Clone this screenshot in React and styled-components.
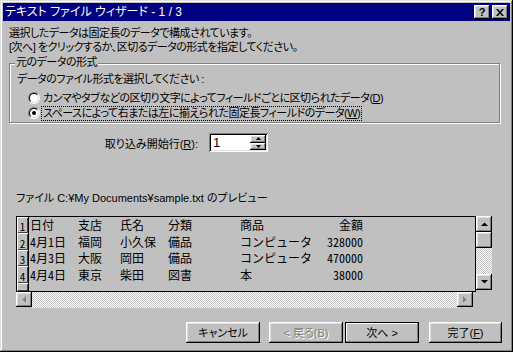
import React from 'react';
import styled, { createGlobalStyle, css } from 'styled-components';

const GlobalStyle = createGlobalStyle`
  html, body {
    margin: 0;
    padding: 0;
    background: #c0c0c0;
  }
  body {
    font-family: "Liberation Sans", "Noto Sans CJK JP", sans-serif;
    font-size: 12px;
    color: #000;
  }
`;

// dialog text is narrower than Noto's full-width glyphs, so tighten it
const dialogText = css`
  font-size: 11px;
  letter-spacing: -0.5px;
  font-feature-settings: "palt";
`;

const raised = css`
  background: #c0c0c0;
  box-shadow: inset -1px -1px 0 #000, inset 1px 1px 0 #fff,
    inset -2px -2px 0 #808080, inset 2px 2px 0 #dfdfdf;
`;

const checker = css`
  background: repeating-conic-gradient(#fff 0 25%, #c0c0c0 0 50%) 0 0 / 2px 2px;
`;

const rows = [
  { n: '1', h: 16, cells: ['日付', '支店', '氏名', '分類', '商品', '金額'] },
  { n: '2', h: 17, cells: ['4月1日', '福岡', '小久保', '備品', 'コンピュータ', '328000'] },
  { n: '3', h: 16, cells: ['4月3日', '大阪', '岡田', '備品', 'コンピュータ', '470000'] },
  { n: '4', h: 17, cells: ['4月4日', '東京', '柴田', '図書', '本', '38000'] },
];

const Arrow = ({ dir, disabled }) => {
  const pts = {
    up: '0,4 7,4 3.5,0.5',
    down: '0,0 7,0 3.5,3.5',
    left: '4,0 4,7 0.5,3.5',
    right: '0,0 0,7 3.5,3.5',
  }[dir];
  const vertical = dir === 'up' || dir === 'down';
  return (
    <svg width={vertical ? 7 : 4} height={vertical ? 4 : 7} viewBox={vertical ? '0 0 7 4' : '0 0 4 7'}>
      <polygon points={pts} fill={disabled ? '#808080' : '#000'} />
    </svg>
  );
};

const App = () => {
  return (
    <>
      <GlobalStyle />
      <Window>
        <TitleBar>
          <TitleText>テキスト ファイル ウィザード - 1 / 3</TitleText>
          <CaptionButton>?</CaptionButton>
          <CaptionButton $ml={2}>
            <svg width="8" height="7" viewBox="0 0 8 7">
              <path d="M0 0h2l2 2.5L6 0h2L5 3.5 8 7H6L4 4.5 2 7H0l3-3.5z" fill="#000" />
            </svg>
          </CaptionButton>
        </TitleBar>

        <Body>
          <Intro>
            選択したデータは固定長のデータで構成されています。
            <br />
            [次へ] をクリックするか、区切るデータの形式を指定してください。
          </Intro>

          <GroupBox>
            <Legend>元のデータの形式</Legend>
            <Prompt>データのファイル形式を選択してください :</Prompt>
            <RadioRow $mt={5}>
              <RadioOuter>
                <RadioInner />
              </RadioOuter>
              <RadioLabel>
                カンマやタブなどの区切り文字によってフィールドごとに区切られたデータ(<u>D</u>)
              </RadioLabel>
            </RadioRow>
            <RadioRow $mt={1}>
              <RadioOuter>
                <RadioInner>
                  <RadioDot />
                </RadioInner>
              </RadioOuter>
              <RadioLabel $focused>
                スペースによって右または左に揃えられた固定長フィールドのデータ(<u>W</u>)
              </RadioLabel>
            </RadioRow>
          </GroupBox>

          <StartRow>
            <StartLabel>
              取り込み開始行(<u>R</u>):
            </StartLabel>
            <SpinBox>
              <SpinValue>1</SpinValue>
              <SpinButtons>
                <SpinButton>
                  <svg width="5" height="3" viewBox="0 0 5 3">
                    <polygon points="0,3 5,3 2.5,0" fill="#000" />
                  </svg>
                </SpinButton>
                <SpinButton>
                  <svg width="5" height="3" viewBox="0 0 5 3">
                    <polygon points="0,0 5,0 2.5,3" fill="#000" />
                  </svg>
                </SpinButton>
              </SpinButtons>
            </SpinBox>
          </StartRow>

          <PreviewCaption>ファイル C:¥My Documents¥sample.txt のプレビュー</PreviewCaption>

          <PreviewFrame>
            <DataArea>
              {rows.map((r) => (
                <DataRow key={r.n} $h={r.h}>
                  <RowNum>{r.n}</RowNum>
                  <Cells>
                    {r.cells.map((c, i) => (
                      <Cell key={i} $right={i === 5}>
                        {c}
                      </Cell>
                    ))}
                  </Cells>
                </DataRow>
              ))}
              <DataRow $grow>
                <RowNum />
              </DataRow>
            </DataArea>

            <VScroll>
              <ScrollButton>
                <Arrow dir="up" />
              </ScrollButton>
              <ScrollButton />
              <Track />
              <ScrollButton>
                <Arrow dir="down" />
              </ScrollButton>
            </VScroll>

            <HScroll>
              <ScrollButton $small>
                <Arrow dir="left" disabled />
              </ScrollButton>
              <Track />
              <ScrollButton $small>
                <Arrow dir="right" disabled />
              </ScrollButton>
            </HScroll>
          </PreviewFrame>

          <ButtonRow>
            <PushButton $w={74}>キャンセル</PushButton>
            <PushButton $w={74} $ml={9} $disabled>
              &lt; 戻る(B)
            </PushButton>
            <PushButton $w={74} $ml={2} $default>
              次へ &gt;
            </PushButton>
            <PushButton $w={73} $ml={10}>
              完了(<u>F</u>)
            </PushButton>
          </ButtonRow>
        </Body>
      </Window>
    </>
  );
};

const Window = styled.div`
  width: 513px;
  height: 352px;
  box-sizing: border-box;
  padding: 3px;
  background: #c0c0c0;
  box-shadow: inset -1px -1px 0 #000, inset 1px 1px 0 #dfdfdf,
    inset -2px -2px 0 #808080, inset 2px 2px 0 #fff;
  overflow: hidden;
`;

const TitleBar = styled.div`
  height: 18px;
  display: flex;
  align-items: center;
  padding: 0 2px;
  background: #000080;
  color: #fff;
`;

const TitleText = styled.div`
  flex: 1;
  line-height: 18px;
  white-space: nowrap;
  font-feature-settings: "palt";
`;

const CaptionButton = styled.div`
  ${raised};
  width: 16px;
  height: 14px;
  margin-left: ${(p) => p.$ml || 0}px;
  display: flex;
  align-items: center;
  justify-content: center;
  color: #000;
  font-family: "Liberation Sans", sans-serif;
  font-weight: 700;
  font-size: 11px;
  line-height: 14px;
`;

const Body = styled.div`
  padding: 5px 0 0 6px;
`;

const Intro = styled.div`
  ${dialogText};
  line-height: 14px;
  white-space: nowrap;
`;

const GroupBox = styled.div`
  ${dialogText};
  position: relative;
  width: 491px;
  box-sizing: border-box;
  margin-top: 9px;
  padding: 8px 0 2px 7px;
  border: 1px solid #808080;
  box-shadow: inset 1px 1px 0 #fff, 1px 1px 0 #fff;
`;

const Legend = styled.span`
  position: absolute;
  top: -9px;
  left: 5px;
  padding: 0 1px;
  line-height: 14px;
  background: #c0c0c0;
`;

const Prompt = styled.div`
  line-height: 14px;
`;

const RadioRow = styled.div`
  display: flex;
  align-items: center;
  height: 14px;
  margin-top: ${(p) => p.$mt}px;
  padding-left: 11px;
`;

const RadioOuter = styled.span`
  box-sizing: border-box;
  width: 12px;
  height: 12px;
  border-radius: 50%;
  border: 1px solid;
  border-color: #808080 #fff #fff #808080;
  display: flex;
`;

const RadioInner = styled.span`
  box-sizing: border-box;
  width: 10px;
  height: 10px;
  border-radius: 50%;
  border: 1px solid;
  border-color: #000 #dfdfdf #dfdfdf #000;
  background: #fff;
  display: flex;
  align-items: center;
  justify-content: center;
`;

const RadioDot = styled.span`
  width: 4px;
  height: 4px;
  border-radius: 50%;
  background: #000;
`;

const RadioLabel = styled.span`
  margin-left: 2px;
  padding: 0 1px;
  line-height: 13px;
  white-space: nowrap;
  outline: ${(p) => (p.$focused ? '1px dotted #000' : 'none')};
`;

const StartRow = styled.div`
  ${dialogText};
  letter-spacing: 0;
  display: flex;
  align-items: center;
  gap: 11px;
  margin-top: 10px;
  padding-left: 92px;
`;

const StartLabel = styled.span`
  width: 97px;
  text-align: right;
  white-space: nowrap;
`;

const SpinBox = styled.div`
  width: 59px;
  height: 19px;
  box-sizing: border-box;
  padding: 2px;
  display: flex;
  background: #fff;
  box-shadow: inset 1px 1px 0 #808080, inset -1px -1px 0 #fff,
    inset 2px 2px 0 #000, inset -2px -2px 0 #dfdfdf;
`;

const SpinValue = styled.span`
  flex: 1;
  padding-left: 2px;
  line-height: 15px;
  font-size: 13px;
`;

const SpinButtons = styled.div`
  width: 16px;
  display: flex;
  flex-direction: column;
`;

const SpinButton = styled.div`
  ${raised};
  flex: 1;
  display: flex;
  align-items: center;
  justify-content: center;
`;

const PreviewCaption = styled.div`
  margin-top: 39px;
  padding-left: 7px;
  line-height: 14px;
  font-size: 11px;
  white-space: nowrap;
  font-feature-settings: "palt";
`;

const PreviewFrame = styled.div`
  margin-top: 11px;
  margin-left: 7px;
  display: grid;
  grid-template-columns: 460px 16px;
  grid-template-rows: 76px 16px;
`;

const DataArea = styled.div`
  box-sizing: border-box;
  border: 1px solid #000;
  display: flex;
  flex-direction: column;
  overflow: hidden;
  font-family: "Noto Sans CJK JP", sans-serif;
  font-feature-settings: "hwid";
`;

const DataRow = styled.div`
  display: flex;
  height: ${(p) => (p.$grow ? 'auto' : `${p.$h}px`)};
  flex: ${(p) => (p.$grow ? 1 : 'none')};
`;

const RowNum = styled.div`
  width: 12px;
  box-sizing: border-box;
  border-right: 1px solid #000;
  box-shadow: inset 1px 1px 0 #fff, inset -1px -1px 0 #404040;
  display: flex;
  align-items: flex-end;
  justify-content: center;
  padding-bottom: 1px;
  font-size: 11px;
  line-height: 12px;
`;

const Cells = styled.div`
  display: grid;
  grid-template-columns: 48px 42px 48px 72px 80px 43px;
  align-items: center;
  padding-left: 1px;
`;

const Cell = styled.span`
  white-space: nowrap;
  line-height: 14px;
  text-align: ${(p) => (p.$right ? 'right' : 'left')};
`;

const VScroll = styled.div`
  height: 74px;
  display: flex;
  flex-direction: column;
`;

const HScroll = styled.div`
  width: 457px;
  display: flex;
`;

const ScrollButton = styled.div`
  ${raised};
  width: 16px;
  height: ${(p) => (p.$small ? 15 : 16)}px;
  flex: none;
  display: flex;
  align-items: center;
  justify-content: center;
`;

const Track = styled.div`
  ${checker};
  flex: 1;
`;

const ButtonRow = styled.div`
  ${dialogText};
  letter-spacing: 0;
  display: flex;
  margin-top: 14px;
  padding-left: 177px;
`;

const PushButton = styled.div`
  ${raised};
  width: ${(p) => p.$w}px;
  height: 21px;
  box-sizing: border-box;
  margin-left: ${(p) => p.$ml || 0}px;
  display: flex;
  align-items: center;
  justify-content: center;
  line-height: 14px;
  white-space: nowrap;
  color: ${(p) => (p.$disabled ? '#808080' : '#000')};
  text-shadow: ${(p) => (p.$disabled ? '1px 1px 0 #fff' : 'none')};
  ${(p) =>
    p.$default &&
    css`
      border: 1px solid #000;
      box-shadow: inset -1px -1px 0 #808080, inset 1px 1px 0 #fff;
    `}
`;

export default App;
